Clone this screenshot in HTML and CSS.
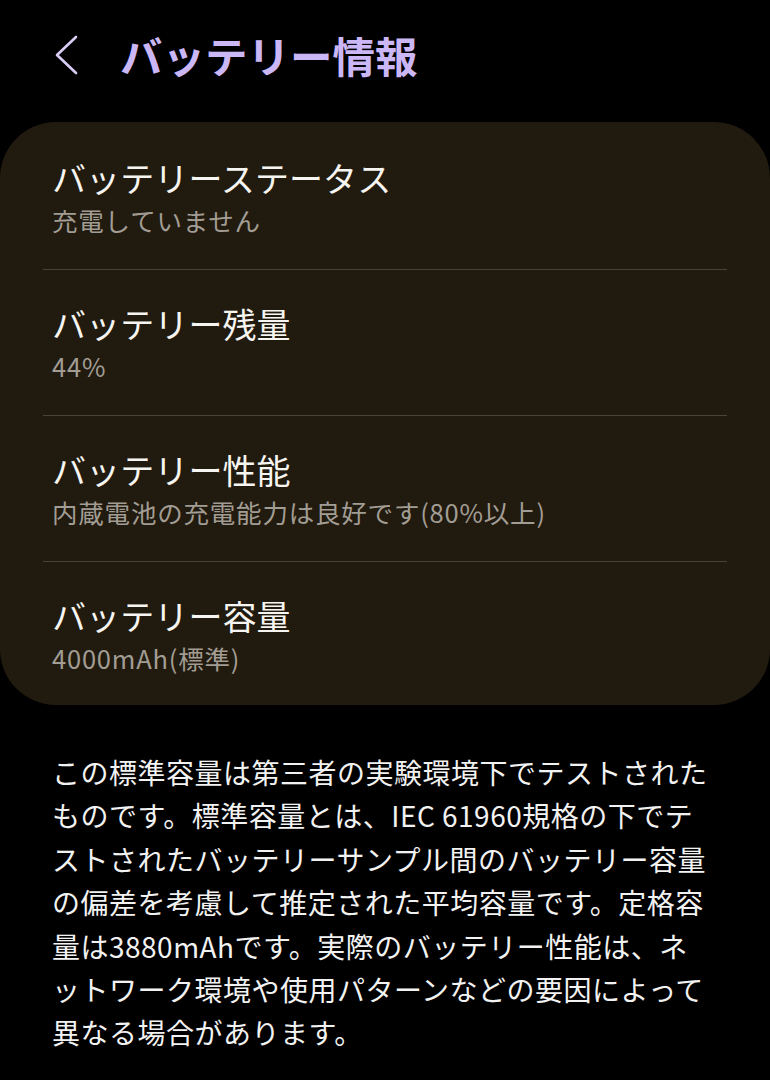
FILE: index.html
```html
<!DOCTYPE html>
<html lang="ja">
<head>
<meta charset="utf-8">
<link rel="stylesheet" href="styles.css">
</head>
<body>
<header class="header">
  <svg class="back" width="30" height="42" viewBox="0 0 30 42"><polyline points="24,3 5,21 24,39" fill="none" stroke="#d9ccf5" stroke-width="2.6" stroke-linecap="round" stroke-linejoin="round"/></svg>
  <h1 class="title">バッテリー情報</h1>
</header>
<section class="card">
  <div class="row">
    <div class="row-title">バッテリーステータス</div>
    <div class="row-sub">充電していません</div>
  </div>
  <div class="row">
    <div class="row-title">バッテリー残量</div>
    <div class="row-sub">44%</div>
  </div>
  <div class="row">
    <div class="row-title">バッテリー性能</div>
    <div class="row-sub">内蔵電池の充電能力は良好です(80%以上)</div>
  </div>
  <div class="row">
    <div class="row-title">バッテリー容量</div>
    <div class="row-sub">4000mAh(標準)</div>
  </div>
</section>
<p class="note">この標準容量は第三者の実験環境下でテストされた<br>ものです。標準容量とは、IEC 61960規格の下でテ<br>ストされたバッテリーサンプル間のバッテリー容量<br>の偏差を考慮して推定された平均容量です。定格容<br>量は3880mAhです。実際のバッテリー性能は、ネ<br>ットワーク環境や使用パターンなどの要因によって<br>異なる場合があります。</p>
</body>
</html>
```
FILE: styles.css
```css
html, body {
  margin: 0;
  padding: 0;
  background: #000;
}
body {
  width: 770px;
  height: 1080px;
  overflow: hidden;
  font-family: "Noto Sans CJK JP", "Noto Sans", sans-serif;
  color: #f4f3ef;
}
.header {
  height: 110px;
  display: flex;
  align-items: center;
  padding-left: 52px;
  box-sizing: border-box;
}
.back {
  display: block;
  margin-right: 38px;
}
.title {
  margin: 0;
  font-size: 42.5px;
  font-weight: 700;
  color: #cbb7f6;
  line-height: 1;
  letter-spacing: 0;
}
.card {
  margin-top: 12px;
  background: #211a0e;
  border-radius: 56px;
  padding: 2px 43px 0;
}
.row {
  padding: 32px 9px 29px;
  border-bottom: 1px solid #4a4233;
}
.row:last-child {
  border-bottom: none;
  padding-bottom: 27px;
}
.row-title {
  font-size: 34px;
  line-height: 44px;
  color: #f6f5f1;
  letter-spacing: 0.1px;
}
.row-sub {
  font-size: 25.5px;
  line-height: 40px;
  color: #a29d94;
  letter-spacing: 0.8px;
}
.note {
  margin: 46px 0 0;
  padding: 0 40px 0 52px;
  font-size: 28px;
  line-height: 43.4px;
  color: #f2f2f2;
  letter-spacing: 0.5px;
  white-space: nowrap;
}
```
